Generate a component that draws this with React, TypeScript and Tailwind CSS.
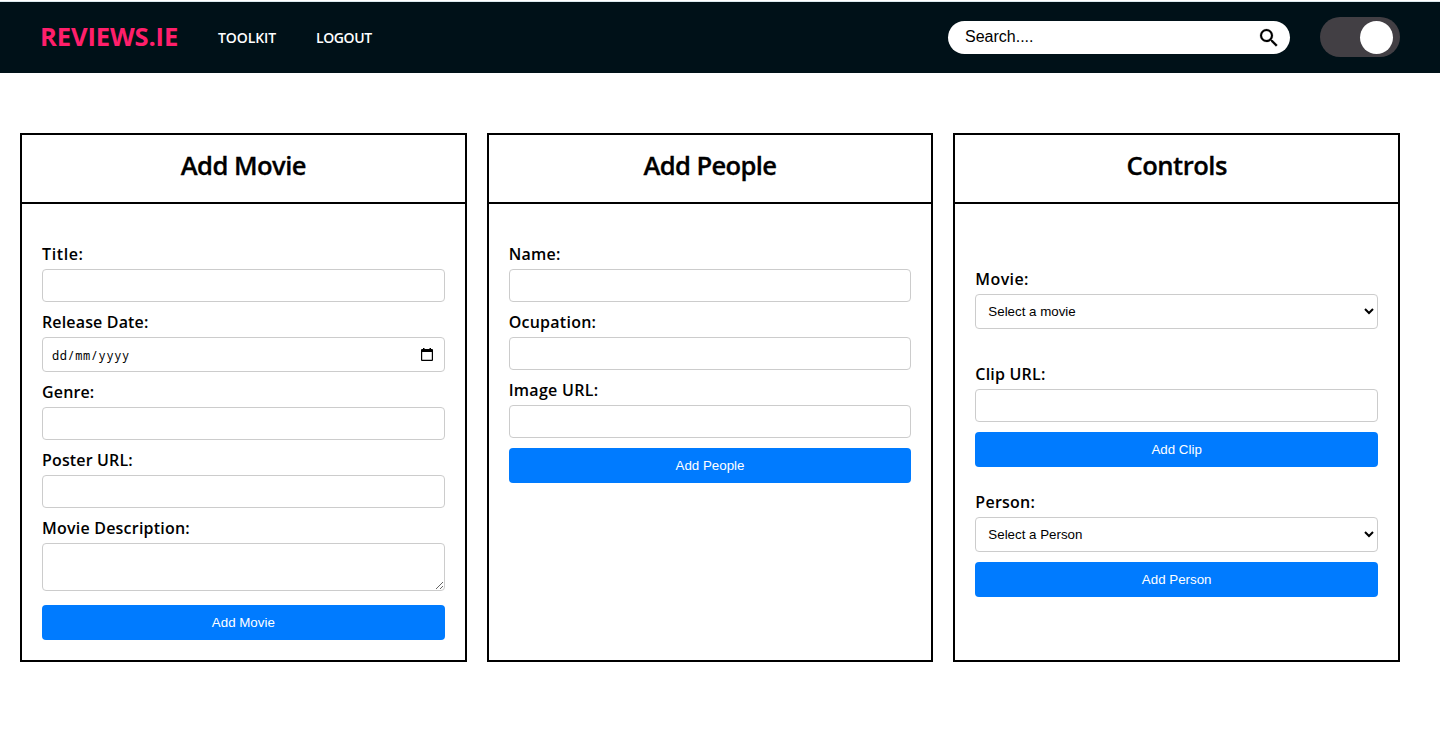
import type { ReactNode } from "react";

const labelFont = "font-['Open_Sans',sans-serif] font-semibold";

function Label({ children, track }: { children: ReactNode; track: string }) {
  return (
    <div className={`h-5 mb-[5px] text-base leading-5 whitespace-nowrap ${labelFont}`}>
      <span className={track}>{children}</span>
    </div>
  );
}

function TextInput() {
  return <input type="text" className="block w-full h-[33px] mb-2.5 rounded border border-[#ccc] bg-white px-2" />;
}

function Select({ text }: { text: string }) {
  return (
    <select className="block w-full h-[35px] mb-2.5 rounded border border-[#ccc] bg-white px-2 text-[13.333px] text-black font-['Liberation_Sans',sans-serif]">
      <option>{text}</option>
    </select>
  );
}

function Button({ children }: { children: ReactNode }) {
  return (
    <button className="block w-full h-[35px] rounded bg-[#007bff] text-white text-[13.333px] leading-none font-['Liberation_Sans',sans-serif]">
      {children}
    </button>
  );
}

function Card({ title, track, children }: { title: string; track: string; children: ReactNode }) {
  return (
    <section className="border-2 border-black">
      <h2 className={`h-[69px] border-b-2 border-black pt-[15px] text-center text-[25.6px] leading-8 [-webkit-text-stroke:0.3px_black] ${labelFont} ${track}`}>
        {title}
      </h2>
      <div className="px-5 pt-10 pb-5">{children}</div>
    </section>
  );
}

export default function App() {
  return (
    <div className="h-[733px] bg-white text-black overflow-hidden">
      <div className="h-0.5 border-b border-[#dce9ee]" />
      <header className="flex h-[71px] items-center bg-[#001118] pl-10 pr-10 font-['Open_Sans',sans-serif]">
        <div className="w-[178px] text-[25.6px] font-bold text-[#ff1f6b] tracking-[-0.15px] whitespace-nowrap">REVIEWS.IE</div>
        <nav className="flex flex-1 text-sm font-semibold text-white whitespace-nowrap">
          <a className="w-[98px] tracking-[-0.1px]">TOOLKIT</a>
          <a className="tracking-[-0.4px]">LOGOUT</a>
        </nav>
        <div className="flex h-[33px] w-[342px] items-center justify-between rounded-full bg-white pl-[17px] pr-[9px]">
          <span className="font-['Liberation_Sans',sans-serif] text-base leading-none text-black pb-px">Search....</span>
          <svg viewBox="0 0 24 24" className="size-6" fill="currentColor" stroke="currentColor" strokeWidth="0.2">
            <path d="M15.5 14h-.79l-.28-.27A6.471 6.471 0 0 0 16 9.5 6.5 6.5 0 1 0 9.5 16c1.61 0 3.09-.59 4.23-1.57l.27.28v.79l5 4.99L20.49 19l-4.99-5zm-6 0C7.01 14 5 11.99 5 9.5S7.01 5 9.5 5 14 7.01 14 9.5 11.99 14 9.5 14z" />
          </svg>
        </div>
        <div className="ml-[30px] mt-[15px] flex h-10 w-20 items-start justify-end self-start rounded-full bg-[#423f44] pt-1 pr-[7px]">
          <div className="size-[33px] rounded-full bg-white" />
        </div>
      </header>
      <main className="grid h-[589px] grid-cols-3 gap-5 pl-5 pr-10 pt-[60px]">
        <Card title="Add Movie" track="tracking-[-0.55px]">
          <Label track="tracking-[0.6px]">Title:</Label>
          <TextInput />
          <Label track="tracking-[0.15px]">Release Date:</Label>
          <div className="mb-2.5 flex h-[35px] items-center justify-between rounded border border-[#ccc] pl-[9px] pr-[11px]">
            <span className="pt-0.5 font-['Noto_Sans_Mono','DejaVu_Sans_Mono',monospace] text-[12px] leading-none tracking-[0.57px]">dd/mm/yyyy</span>
            <svg viewBox="0 0 12 13" className="h-[13px] w-3" fill="currentColor">
              <path d="M2 0h1.5v1h5V0H10v1h1a1 1 0 0 1 1 1v10a1 1 0 0 1-1 1H1a1 1 0 0 1-1-1V2a1 1 0 0 1 1-1h1zM1.2 4v7.8h9.6V4z" fillRule="evenodd" />
            </svg>
          </div>
          <Label track="tracking-[0.15px]">Genre:</Label>
          <TextInput />
          <Label track="tracking-[0.15px]">Poster URL:</Label>
          <TextInput />
          <Label track="tracking-[0.22px]">Movie Description:</Label>
          <textarea className="mb-3.5 block h-12 w-full resize rounded border border-[#ccc] bg-white p-2" />
          <Button>Add Movie</Button>
        </Card>
        <Card title="Add People" track="tracking-[-0.65px]">
          <Label track="tracking-[0.25px]">Name:</Label>
          <TextInput />
          <Label track="tracking-[0.25px]">Ocupation:</Label>
          <TextInput />
          <Label track="tracking-[0.28px]">Image URL:</Label>
          <TextInput />
          <Button>Add People</Button>
        </Card>
        <Card title="Controls" track="tracking-[-0.5px]">
          <div className="pt-[25px]">
            <Label track="tracking-[0.4px]">Movie:</Label>
            <Select text="Select a movie" />
          </div>
          <div className="pt-[25px]">
            <Label track="tracking-[0.2px]">Clip URL:</Label>
            <TextInput />
            <Button>Add Clip</Button>
          </div>
          <div className="pt-[25px]">
            <Label track="tracking-[0.25px]">Person:</Label>
            <Select text="Select a Person" />
            <Button>Add Person</Button>
          </div>
        </Card>
      </main>
    </div>
  );
}
